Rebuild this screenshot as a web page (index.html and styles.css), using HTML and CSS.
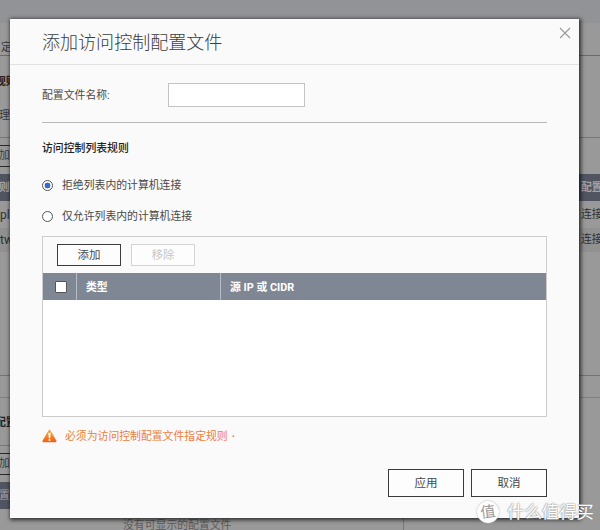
FILE: index.html
```
<!DOCTYPE html>
<html lang="zh-CN">
<head>
<meta charset="utf-8">
<title>添加访问控制配置文件</title>
<link rel="stylesheet" href="styles.css">
</head>
<body>
<div class="page">
  <div class="topbar"></div>
  <div class="row tabs"><span class="l tab">定</span></div>
  <div class="row rules"><b class="l rule">规则</b></div>
  <div class="row manage"><span class="l">理</span></div>
  <div class="row tools"><span class="ghost">加</span></div>
  <div class="row head"><span class="l shift">则</span><span class="r">配置</span></div>
  <div class="row item"><span class="l latin">pl</span><span class="r">连接</span></div>
  <div class="row item alt"><span class="l latin">tw</span><span class="r">连接</span></div>
  <div class="row blank"></div>
  <div class="row strip"></div>
  <div class="lower">
    <div class="row section"><b class="l rule">配置</b></div>
    <div class="row tools"><span class="ghost">加</span></div>
    <div class="row head last"><span class="l">置</span></div>
    <div class="empty"><span class="none">没有可显示的配置文件</span></div>
  </div>
</div>

<div class="dialog">
  <header class="title-bar">
    <h1>添加访问控制配置文件</h1>
    <svg class="close" viewBox="0 0 12 12"><path d="M1 1l10 10M11 1L1 11"/></svg>
  </header>
  <div class="content">
    <div class="name-row"><label for="name">配置文件名称:</label><input id="name" type="text"></div>
    <h2>访问控制列表规则</h2>
    <div class="option"><i class="radio on"></i><span>拒绝列表内的计算机连接</span></div>
    <div class="option"><i class="radio"></i><span>仅允许列表内的计算机连接</span></div>
    <div class="panel">
      <div class="actions"><button>添加</button><button class="off">移除</button></div>
      <div class="grid-head">
        <span class="check"><i></i></span><span class="type">类型</span><span class="source">源 IP 或 CIDR</span>
      </div>
      <div class="grid-body"></div>
    </div>
    <div class="warning">
      <svg viewBox="0 0 16 14">
        <defs><linearGradient id="g" x1="0" y1="0" x2="0" y2="1"><stop offset="0" stop-color="#f6a63c"/><stop offset="1" stop-color="#ed681b"/></linearGradient></defs>
        <path d="M8 1.7L14.3 12.5H1.7Z" fill="url(#g)" stroke="url(#g)" stroke-width="2.4" stroke-linejoin="round"/>
        <path d="M6.8 3.4h2.4L8.8 9.3H7.2z" fill="#fff"/><circle cx="8" cy="11.2" r="1.1" fill="#fff"/>
      </svg>
      <span>必须为访问控制配置文件指定规则<span class="dot">·</span></span>
    </div>
    <footer><button>应用</button><button>取消</button></footer>
  </div>
</div>

<div class="watermark"><span class="seal">值</span><span>什么值得买</span></div>
</body>
</html>
```
FILE: styles.css
```
* { box-sizing: border-box; }
body {
  margin: 0;
  width: 600px;
  height: 530px;
  overflow: hidden;
  position: relative;
  font: 10.85px/16px Roboto, "Noto Sans CJK SC", sans-serif;
  color: #484848;
}

.page { height: 530px; background: #999; color: #3b3b3b; overflow: hidden; }
.topbar { height: 23px; background: #929397; }
.row { display: flex; justify-content: space-between; align-items: center; overflow: hidden; }
.l { margin-left: -1px; white-space: nowrap; }
.r { width: 20px; padding-left: 1px; white-space: nowrap; overflow: hidden; }
.tabs { height: 33px; border-bottom: 1px solid #6b6b6b; padding-top: 17px; }
.tab { margin-left: 1px; }
.rules { height: 51px; }
.rule { margin-left: -5px; color: #222; }
.manage { height: 31px; border-bottom: 1px solid #777; padding-bottom: 14px; }
.manage .l { padding-top: 2px; }
.tools { height: 36px; }
.ghost {
  width: 40px;
  height: 22px;
  margin-left: -13px;
  padding-left: 11px;
  border: 1px solid #292929;
  line-height: 20px;
}
.head { height: 27px; background: #515562; color: #a1a1a5; font-weight: bold; }
.shift { margin-left: -1px; }
.item { height: 27px; color: #303030; }
.latin { margin-left: 0; font-size: 12px; }
.alt { height: 24px; background: #919191; }
.blank { height: 124px; border-bottom: 1px solid #737373; }
.strip { height: 22px; border-bottom: 1px solid #808080; }
.lower { width: 404px; border-right: 1px solid #777; }
.section { height: 48px; border-bottom: 1px solid #777; }
.section .rule { padding-top: 2px; }
.last { font-weight: normal; }
.empty { height: 21px; padding: 9px 0 0 123px; color: #5c5c5c; }
.none { white-space: nowrap; }

.dialog {
  position: absolute;
  left: 10px;
  top: 19px;
  width: 569px;
  height: 499px;
  background: #fafafa;
  box-shadow: 1px 1px 4px 1px rgba(0, 0, 0, .72);
}
.title-bar {
  height: 46px;
  padding: 0 8px 0 32px;
  display: flex;
  justify-content: space-between;
  border-bottom: 1px solid #e2e2e2;
}
h1 { margin: 0; font-size: 18.05px; line-height: 48px; font-weight: 300; color: #3c3c3c; }
.close { width: 12px; height: 12px; margin-top: 8px; fill: none; stroke: #999; stroke-width: 1.1; }
.content { padding: 0 32px; }
.name-row { height: 58px; display: flex; align-items: center; border-bottom: 1px solid #b9b9b9; }
.name-row label { width: 126px; padding-top: 4px; }
.name-row input { width: 137px; height: 24px; margin: 2px 0 0; padding: 0 4px; border: 1px solid #c3c3c3; background: #fff; }
h2 { margin: 18px 0 0; font-size: 10.85px; line-height: 16px; font-weight: 500; color: #202020; }
.option { display: flex; align-items: center; height: 16px; margin-top: 15px; gap: 9px; }
.option span { padding-top: 2px; }
h2 + .option { margin-top: 20px; }
.radio { width: 11px; height: 11px; border: 1px solid #555; border-radius: 50%; background: #fff; }
.on { background: radial-gradient(circle, #3269d6 0 2.7px, #fff 3.2px); }
.panel { height: 181px; margin-top: 12px; border: 1px solid #ccc; display: flex; flex-direction: column; }
.actions { height: 36px; display: flex; gap: 10px; padding: 7px 0 0 14px; }
button {
  width: 64px;
  height: 22px;
  padding: 0;
  border: 1px solid #3b3b3b;
  background: #fdfdfd;
  color: #484848;
  font: 11.5px/18px Roboto, "Noto Sans CJK SC", sans-serif;
}
.off { color: #c6c6c6; border-color: #d4d4d4; }
.grid-head { height: 27px; display: flex; background: #7f8795; color: #fff; font-weight: bold; line-height: 29px; }
.check { width: 34px; border-right: 1px solid #b8bdc6; padding: 8px 0 0 12px; }
.check i { display: block; width: 12px; height: 12px; background: #fff; border: 1px solid #555; border-radius: 1px; }
.type { width: 144px; padding-left: 9px; border-right: 1px solid #b8bdc6; }
.source { padding-left: 9px; }
.grid-body { flex: 1; background: #fff; }
.warning { height: 16px; display: flex; align-items: center; gap: 8px; margin-top: 11px; color: #ee7d3c; }
.warning svg { width: 15px; height: 14px; }
.warning > span { padding-top: 2px; }
.dot { margin-left: 4px; font-weight: bold; }
footer { display: flex; justify-content: flex-end; gap: 7px; margin-top: 25px; }
footer button { width: 76px; height: 28px; line-height: 24px; }

.watermark {
  position: absolute;
  left: 477px;
  top: 501px;
  display: flex;
  gap: 8px;
  align-items: center;
  color: #fff;
  font-size: 17.4px;
  line-height: 22px;
  white-space: nowrap;
  text-shadow: 0 0 2px #888, 0 0 1px #888;
}
.seal {
  width: 22px;
  height: 22px;
  border-radius: 50%;
  background: #fff;
  color: #999;
  font-size: 15px;
  text-align: center;
  text-shadow: none;
  box-shadow: 0 0 2px #aaa;
  transform: rotate(-8deg);
}
```
